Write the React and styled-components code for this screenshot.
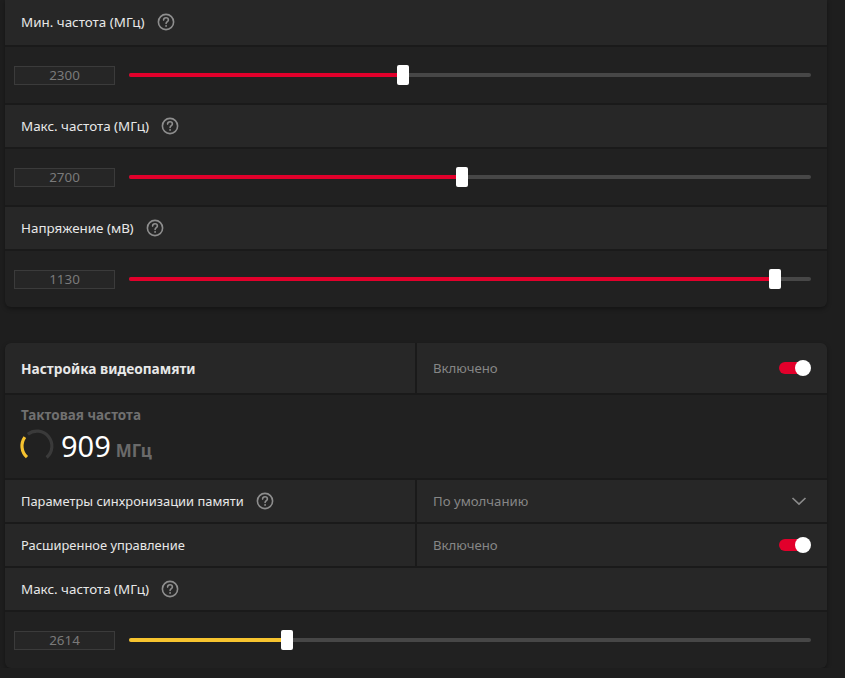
import React from "react";
import styled, { createGlobalStyle } from "styled-components";

const GlobalStyle = createGlobalStyle`
  html, body { margin: 0; padding: 0; background: #1e1e1e; }
  body {
    font-family: "Noto Sans", "Open Sans", Arial, sans-serif;
    color: #e6e6e6;
    overflow: hidden;
  }
`;

const Page = styled.div`
  display: flex;
  flex-direction: column;
  gap: 36px;
  width: 822px;
  padding-left: 5px;
  margin-top: -1px;
`;

const Card = styled.section`
  display: flex;
  flex-direction: column;
  gap: 2px;
  background: #1a1a1a;
  border-radius: ${(p) => (p.$cut ? "0 0 6px 6px" : "6px")};
  overflow: hidden;
  box-shadow: 0 2px 4px rgba(0, 0, 0, 0.35);
`;

const HeaderRow = styled.div`
  display: flex;
  align-items: center;
  gap: 12px;
  height: ${(p) => p.$h || 42}px;
  padding: 0 16px;
  background: #272727;
  font-size: 13.4px;
  color: #e8e8e8;
`;

const SplitRow = styled.div`
  display: grid;
  grid-template-columns: 410px 1fr;
  gap: 2px;
  height: ${(p) => p.$h || 42}px;
`;

const Cell = styled.div`
  display: flex;
  align-items: center;
  gap: 12px;
  padding: 0 16px;
  background: #272727;
  color: #e8e8e8;
  font-weight: ${(p) => (p.$bold ? 700 : 400)};
  font-size: ${(p) => (p.$bold ? "13.7px" : "12.9px")};
`;

const ValueCell = styled(Cell)`
  justify-content: space-between;
  color: #868686;
  font-size: 13.2px;
  padding-right: ${(p) => p.$pr || 16}px;
`;

const SliderRow = styled.div`
  display: flex;
  align-items: center;
  gap: 14px;
  height: 56px;
  padding: 0 16px 0 9px;
  background: #212121;
`;

const NumBox = styled.div`
  box-sizing: border-box;
  width: 101px;
  height: 19px;
  flex: none;
  border: 1px solid #3b3b3b;
  background: #262626;
  color: #7a7a7a;
  font-size: 13.4px;
  line-height: 17px;
  text-align: center;
`;

const Track = styled.div`
  position: relative;
  flex: 1;
  height: 4px;
  border-radius: 2px;
  background: #474747;
`;

const Fill = styled.div`
  height: 100%;
  border-radius: 2px;
  background: ${(p) => p.$color};
`;

const Thumb = styled.div`
  position: absolute;
  top: 50%;
  width: 12px;
  height: 20px;
  margin-left: -6px;
  transform: translateY(-50%);
  border-radius: 2px;
  background: #ffffff;
`;

const ClockSection = styled.div`
  display: flex;
  flex-direction: column;
  gap: 4px;
  height: 83px;
  box-sizing: border-box;
  padding: 11px 16px 0 16px;
  background: #212121;
`;

const ClockLabel = styled.div`
  font-size: 13.5px;
  font-weight: 700;
  color: #707070;
  line-height: 18px;
`;

const ClockLine = styled.div`
  display: flex;
  align-items: center;
  gap: 6px;
  margin-left: -2px;
`;

const ClockValue = styled.div`
  display: flex;
  align-items: baseline;
  gap: 5px;
`;

const BigNum = styled.span`
  font-size: 29px;
  color: #ffffff;
  line-height: 36px;
`;

const Unit = styled.span`
  font-size: 17px;
  font-weight: 700;
  color: #6a6a6a;
`;

const ToggleWrap = styled.div`
  position: relative;
  width: 32px;
  height: 16px;
  flex: none;
`;

const ToggleTrack = styled.div`
  position: absolute;
  left: 0;
  right: 2px;
  top: 2px;
  height: 12px;
  border-radius: 6px;
  background: #e2002b;
`;

const ToggleKnob = styled.div`
  position: absolute;
  right: 0;
  top: 0;
  width: 16px;
  height: 16px;
  border-radius: 50%;
  background: #ffffff;
`;

const HelpIcon = () => (
  <svg width="18" height="18" viewBox="0 0 18 18" style={{ flex: "none" }}>
    <circle cx="9" cy="9" r="7.6" fill="none" stroke="#8e8e8e" strokeWidth="1.6" />
    <path
      d="M6.6 7.1c0-1.4 1.1-2.3 2.4-2.3s2.4.9 2.4 2.1c0 1.7-2.3 1.8-2.3 3.6"
      fill="none"
      stroke="#8e8e8e"
      strokeWidth="1.6"
      strokeLinecap="round"
    />
    <circle cx="9.1" cy="12.9" r="0.95" fill="#8e8e8e" />
  </svg>
);

const Chevron = () => (
  <svg width="16" height="10" viewBox="0 0 16 10">
    <path d="M1.5 2l6.5 6 6.5-6" fill="none" stroke="#8a8a8a" strokeWidth="1.7" />
  </svg>
);

const polar = (cx, cy, r, deg) => {
  const a = ((deg - 90) * Math.PI) / 180;
  return [cx + r * Math.cos(a), cy + r * Math.sin(a)];
};
const arc = (cx, cy, r, from, to) => {
  const [x1, y1] = polar(cx, cy, r, from);
  const [x2, y2] = polar(cx, cy, r, to);
  let sweep = to - from;
  if (sweep < 0) sweep += 360;
  const large = sweep > 180 ? 1 : 0;
  return `M${x1.toFixed(2)} ${y1.toFixed(2)} A${r} ${r} 0 ${large} 1 ${x2.toFixed(2)} ${y2.toFixed(2)}`;
};

const Gauge = () => (
  <svg width="36" height="36" viewBox="0 0 36 36" style={{ flex: "none" }}>
    <path d={arc(18, 18, 15, 322, 140)} fill="none" stroke="#3a3a3a" strokeWidth="3.2" />
    <path d={arc(18, 18, 15, 222, 306)} fill="none" stroke="#f5c22f" strokeWidth="3.2" />
  </svg>
);

const Toggle = () => (
  <ToggleWrap>
    <ToggleTrack />
    <ToggleKnob />
  </ToggleWrap>
);

const Slider = ({ value, pct, color }) => (
  <SliderRow>
    <NumBox>{value}</NumBox>
    <Track>
      <Fill $color={color} style={{ width: `${pct}%` }} />
      <Thumb style={{ left: `${pct}%` }} />
    </Track>
  </SliderRow>
);

const RED = "#e2002b";
const YELLOW = "#f7c42f";

const topSettings = [
  { label: "Мин. частота (МГц)", value: "2300", pct: 40.2 },
  { label: "Макс. частота (МГц)", value: "2700", pct: 48.8 },
  { label: "Напряжение (мВ)", value: "1130", pct: 94.7 },
];

export default function App() {
  return (
    <>
      <GlobalStyle />
      <Page>
        <Card $cut>
          {topSettings.map((s, i) => (
            <React.Fragment key={s.label}>
              <HeaderRow $h={i === 0 ? 46 : 42}>
                {s.label}
                <HelpIcon />
              </HeaderRow>
              <Slider value={s.value} pct={s.pct} color={RED} />
            </React.Fragment>
          ))}
        </Card>

        <Card>
          <SplitRow $h={50}>
            <Cell $bold>Настройка видеопамяти</Cell>
            <ValueCell>
              Включено
              <Toggle />
            </ValueCell>
          </SplitRow>
          <ClockSection>
            <ClockLabel>Тактовая частота</ClockLabel>
            <ClockLine>
              <Gauge />
              <ClockValue>
                <BigNum>909</BigNum>
                <Unit>МГц</Unit>
              </ClockValue>
            </ClockLine>
          </ClockSection>
          <SplitRow>
            <Cell>
              Параметры синхронизации памяти
              <HelpIcon />
            </Cell>
            <ValueCell $pr={20}>
              По умолчанию
              <Chevron />
            </ValueCell>
          </SplitRow>
          <SplitRow>
            <Cell>Расширенное управление</Cell>
            <ValueCell>
              Включено
              <Toggle />
            </ValueCell>
          </SplitRow>
          <HeaderRow>
            Макс. частота (МГц)
            <HelpIcon />
          </HeaderRow>
          <Slider value="2614" pct={23.2} color={YELLOW} />
        </Card>
      </Page>
    </>
  );
}
